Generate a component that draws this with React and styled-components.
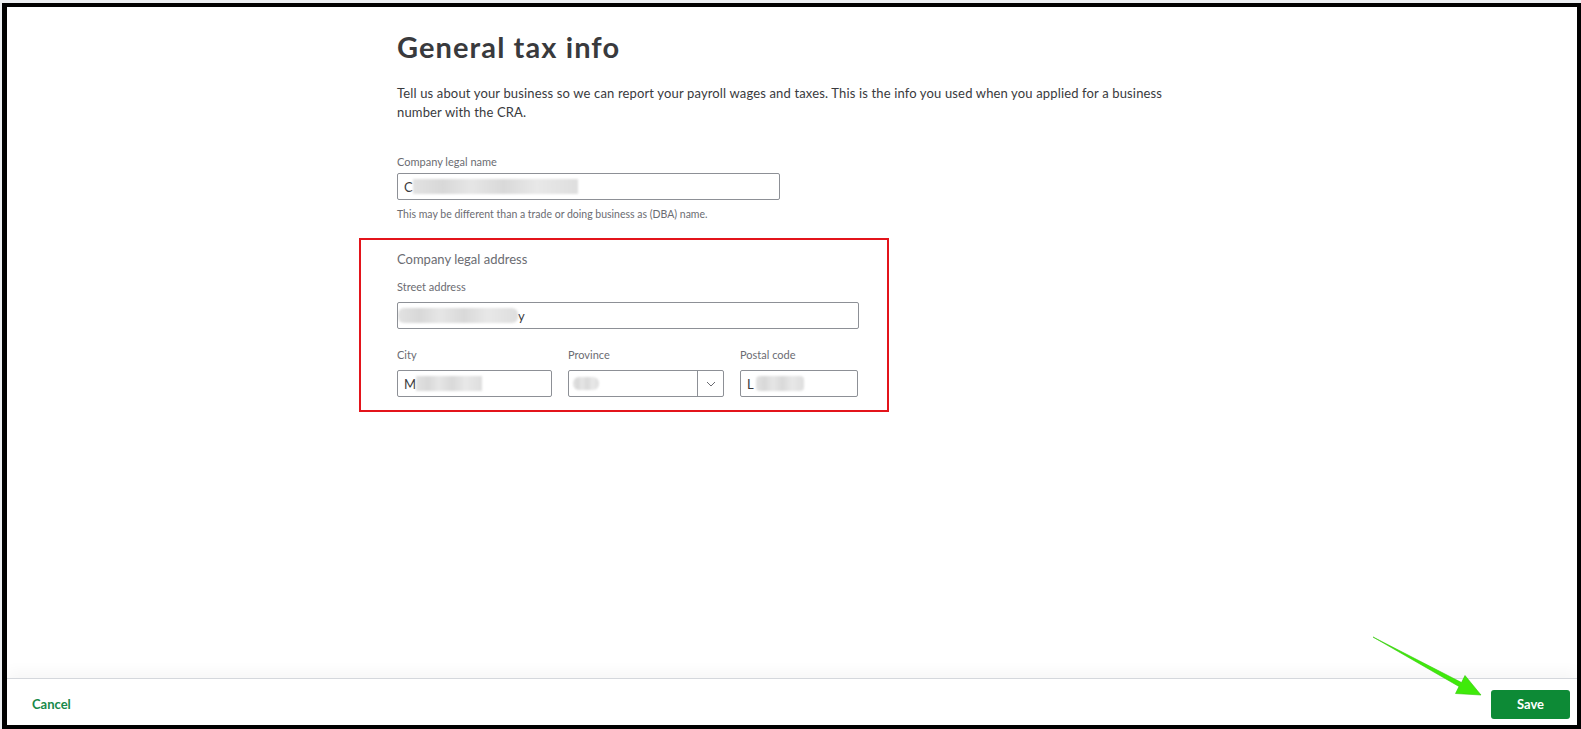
import React from "react";
import styled, { createGlobalStyle } from "styled-components";

const GlobalStyle = createGlobalStyle`
  * { box-sizing: border-box; }
  html, body {
    margin: 0;
    padding: 0;
    background: #eceef1;
    font-family: Lato, "Open Sans", "Liberation Sans", sans-serif;
    color: #393a3d;
  }
`;

const Page = styled.div`
  position: relative;
  width: 1581px;
  height: 729px;
  padding: 3px 0 0 2px;
  overflow: hidden;
`;

const Frame = styled.div`
  width: 1579px;
  height: 726px;
  border: 4px solid #000;
  border-left-width: 5px;
  background: #fff;
  display: flex;
  flex-direction: column;
`;

const Main = styled.main`
  flex: 1;
  padding: 23px 0 0 390px;
`;

const Column = styled.div`
  width: 780px;
`;

const Title = styled.h1`
  margin: 0;
  font-size: 29px;
  line-height: 34px;
  font-weight: 700;
  color: #393a3d;
  letter-spacing: 1.1px;
`;

const Intro = styled.p`
  margin: 20px 0 0;
  font-size: 13px;
  line-height: 19px;
  letter-spacing: 0.15px;
  color: #393a3d;
`;

const Label = styled.div`
  margin-top: ${({ $top }) => $top}px;
  font-size: 11px;
  line-height: 14px;
  color: #6b6c72;
`;

const Field = styled.div`
  margin-top: 4px;
  width: ${({ $w }) => $w}px;
  height: 27px;
  border: 1px solid #8d9096;
  border-radius: 2px;
  display: flex;
  align-items: center;
  padding-left: 6px;
  font-size: 13px;
  color: #393a3d;
  overflow: hidden;
`;

const Helper = styled.div`
  margin-top: 7px;
  font-size: 10.5px;
  line-height: 14px;
  color: #6b6c72;
`;

const AddressBox = styled.section`
  margin: 17px 0 0 -38px;
  width: 530px;
  border: 2px solid #e3141b;
  padding: 10px 28px 13px 36px;
`;

const SectionTitle = styled.div`
  font-size: 13px;
  line-height: 18px;
  color: #6b6c72;
`;

const Row = styled.div`
  margin-top: 19px;
  display: grid;
  grid-template-columns: 155px 156px 118px;
  column-gap: 16px;
`;

const Cell = styled.div`
  display: flex;
  flex-direction: column;
  & > ${Field} {
    margin-top: 8px;
    width: 100%;
  }
`;

const RowLabel = styled.div`
  font-size: 11px;
  line-height: 14px;
  color: #6b6c72;
`;

const SelectBox = styled.div`
  margin-top: 8px;
  height: 27px;
  border: 1px solid #8d9096;
  border-radius: 2px;
  display: flex;
  align-items: stretch;
`;

const SelectValue = styled.div`
  flex: 1;
  display: flex;
  align-items: center;
  padding-left: 4px;
`;

const SelectToggle = styled.div`
  width: 26px;
  border-left: 1px solid #8d9096;
  display: flex;
  align-items: center;
  justify-content: center;
`;

const Blur = styled.span`
  display: inline-block;
  width: ${({ $w }) => $w}px;
  height: ${({ $h = 15 }) => $h}px;
  margin-left: ${({ $ml = 0 }) => $ml}px;
  border-radius: ${({ $r = 0 }) => $r}px;
  background: linear-gradient(
    90deg,
    #e2e2e2 0%,
    #d8d8d8 18%,
    #e6e6e6 35%,
    #d9d9d9 55%,
    #e8e8e8 75%,
    #dedede 100%
  );
  filter: blur(1.2px);
`;

const Char = styled.span`
  font-size: 13px;
  color: #393a3d;
`;

const Footer = styled.footer`
  height: 47px;
  border-top: 1px solid #d4d7dc;
  box-shadow: 0 -6px 14px rgba(0, 0, 0, 0.04);
  display: flex;
  align-items: center;
  justify-content: space-between;
  padding: 4px 7px 0 25px;
`;

const CancelLink = styled.a`
  font-size: 13px;
  font-weight: 700;
  color: #17894a;
  text-decoration: none;
  cursor: pointer;
`;

const SaveButton = styled.button`
  width: 79px;
  height: 29px;
  border: none;
  border-radius: 3px;
  background: #0d8a36;
  color: #fff;
  font-family: inherit;
  font-size: 13px;
  font-weight: 700;
  cursor: pointer;
`;

const Overlay = styled.svg`
  position: absolute;
  left: 0;
  top: 0;
  pointer-events: none;
`;

const Chevron = () => (
  <svg width="10" height="6" viewBox="0 0 10 6" fill="none">
    <path d="M1 1l4 4 4-4" stroke="#6b6c72" strokeWidth="1" />
  </svg>
);

export default function App() {
  return (
    <>
      <GlobalStyle />
      <Page>
        <Frame>
          <Main>
            <Column>
              <Title>General tax info</Title>
              <Intro>
                Tell us about your business so we can report your payroll wages and taxes. This is
                the info you used when you applied for a business number with the CRA.
              </Intro>

              <Label $top={33}>Company legal name</Label>
              <Field $w={383}>
                <Char>C</Char>
                <Blur $w={165} />
              </Field>
              <Helper>This may be different than a trade or doing business as (DBA) name.</Helper>

              <AddressBox>
                <SectionTitle>Company legal address</SectionTitle>
                <Label $top={12}>Street address</Label>
                <Field $w={462} style={{ marginTop: 8, paddingLeft: 0 }}>
                  <Blur $w={120} $r={6} />
                  <Char>y</Char>
                </Field>
                <Row>
                  <Cell>
                    <RowLabel>City</RowLabel>
                    <Field>
                      <Char>M</Char>
                      <Blur $w={66} />
                    </Field>
                  </Cell>
                  <Cell>
                    <RowLabel>Province</RowLabel>
                    <SelectBox>
                      <SelectValue>
                        <Blur $w={26} $h={13} $r={6} />
                      </SelectValue>
                      <SelectToggle>
                        <Chevron />
                      </SelectToggle>
                    </SelectBox>
                  </Cell>
                  <Cell>
                    <RowLabel>Postal code</RowLabel>
                    <Field>
                      <Char>L</Char>
                      <Blur $w={48} $ml={2} $r={4} />
                    </Field>
                  </Cell>
                </Row>
              </AddressBox>
            </Column>
          </Main>
          <Footer>
            <CancelLink>Cancel</CancelLink>
            <SaveButton>Save</SaveButton>
          </Footer>
        </Frame>
        <Overlay width="1581" height="729" viewBox="0 0 1581 729">
          <polygon
            points="1373,637 1459,686.5 1455.5,693.5 1481,695 1465,675.5 1461.5,682.5"
            fill="#3fea0a"
            stroke="#33c80a"
            strokeWidth="0.6"
            strokeLinejoin="round"
          />
        </Overlay>
      </Page>
    </>
  );
}
